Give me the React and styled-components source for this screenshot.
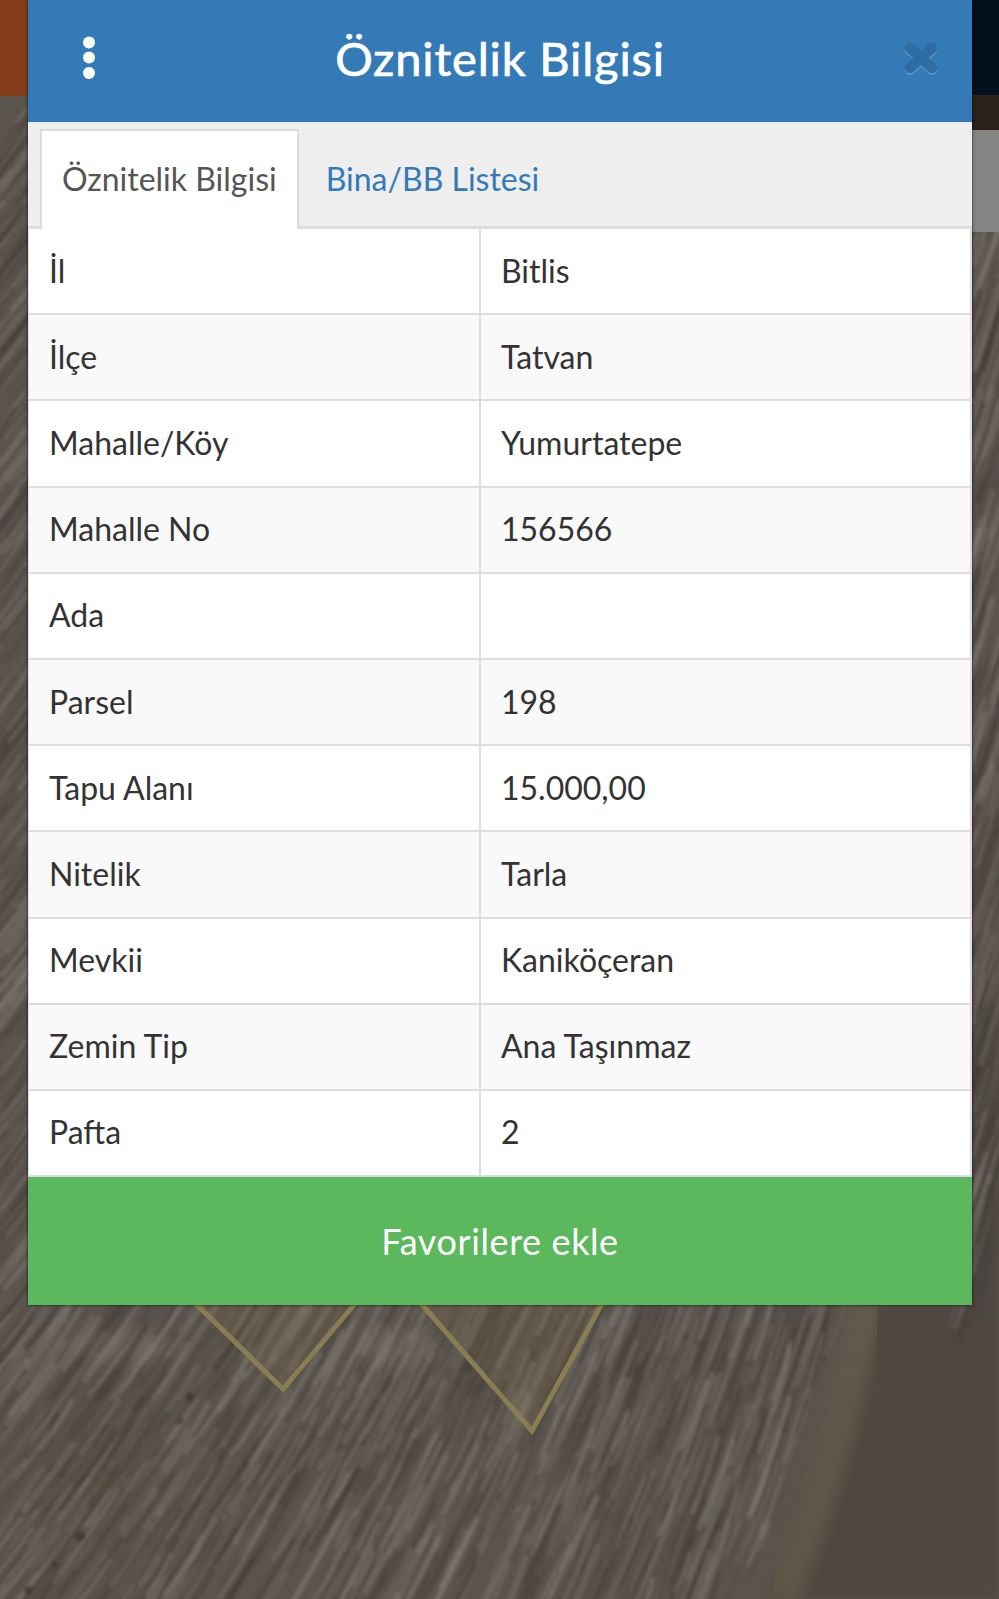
import React, { useMemo } from "react";
import styled, { createGlobalStyle } from "styled-components";

const GlobalStyle = createGlobalStyle`
  html, body {
    margin: 0;
    padding: 0;
    background: #5d5650;
  }
  * {
    box-sizing: border-box;
  }
`;

const Page = styled.div`
  position: relative;
  width: 999px;
  height: 1599px;
  overflow: hidden;
  padding: 0 27px 0 28px;
  font-family: "Lato", "Noto Sans", sans-serif;
`;
const MapImage = styled.svg`
  position: absolute;
  top: 0;
  left: 0;
`;
const Panel = styled.div`
  position: relative;
  display: flex;
  flex-direction: column;
  box-shadow: 0 0 3px rgba(0, 0, 0, 0.75);
`;
const Header = styled.div`
  flex: none;
  display: flex;
  justify-content: space-between;
  align-items: center;
  height: 123px;
  padding: 0 34px 6px 54px;
  background: #337ab7;
  border-bottom: 1px solid #dfe9f2;
`;
const Title = styled.h4`
  margin: 0;
  color: #fff;
  font-size: 47px;
  font-weight: 400;
  letter-spacing: 0.85px;
  -webkit-text-stroke: 0.7px #fff;
`;
const TabBar = styled.div`
  flex: none;
  display: flex;
  align-items: flex-end;
  height: 106px;
  padding-left: 12px;
  background: #eee;
  border-bottom: 3px solid #ddd;
`;
const Tab = styled.div`
  display: flex;
  align-items: center;
  height: 100px;
  margin-right: 5px;
  margin-bottom: -3px;
  padding: 0 20px 4px;
  font-size: 32px;
  color: ${(p) => (p.$active ? "#555" : "#337ab7")};
  background: ${(p) => (p.$active ? "#fff" : "transparent")};
  border: 2px solid ${(p) => (p.$active ? "#ddd" : "transparent")};
  border-bottom: none;
`;
const Table = styled.div`
  flex: none;
  display: flex;
  flex-direction: column;
  background: #fff;
  border-left: 1px solid #ddd;
  border-right: 2px solid #ddd;
`;
const Row = styled.div`
  flex: none;
  display: grid;
  grid-template-columns: 452px 1fr;
  height: 86.2px;
  border-bottom: 2px solid #ddd;
  background: ${(p) => (p.$striped ? "#f9f9f9" : "#fff")};
`;
const Cell = styled.div`
  display: flex;
  align-items: center;
  padding: 0 0 2px 20px;
  color: #333;
  font-size: 32px;
  border-right: ${(p) => (p.$first ? "2px solid #ddd" : "none")};
`;
const AddButton = styled.button`
  flex: none;
  height: 128px;
  border: none;
  padding: 0;
  background: #5cb85c;
  color: #fff;
  font-family: inherit;
  font-size: 36px;
  letter-spacing: 0.6px;
`;

const rows = [
  ["İl", "Bitlis"],
  ["İlçe", "Tatvan"],
  ["Mahalle/Köy", "Yumurtatepe"],
  ["Mahalle No", "156566"],
  ["Ada", ""],
  ["Parsel", "198"],
  ["Tapu Alanı", "15.000,00"],
  ["Nitelik", "Tarla"],
  ["Mevkii", "Kaniköçeran"],
  ["Zemin Tip", "Ana Taşınmaz"],
  ["Pafta", "2"],
];

const random = (seed) => () => {
  seed = (seed + 0x6d2b79f5) | 0;
  let t = Math.imul(seed ^ (seed >>> 15), 1 | seed);
  t = (t + Math.imul(t ^ (t >>> 7), 61 | t)) ^ t;
  return ((t ^ (t >>> 14)) >>> 0) / 4294967296;
};

// furrows of the aerial photo: 50deg on the left, steeper to the right
const makeFurrows = () => {
  const rnd = random(41);
  const furrows = [];
  for (let i = 0; i < 1500; i++) {
    const inMargin = i % 3 === 0;
    const x = inMargin ? (rnd() < 0.5 ? rnd() * 40 : 960 + rnd() * 39) : rnd() * 860;
    const y = inMargin ? 95 + rnd() * 1220 : 1295 + rnd() * 310;
    // the smooth dark field in the corner has no furrows
    if (!inMargin && x > 850 - (y - 1300) * 0.36) continue;
    const angle = ((50 + (Math.min(x, 800) / 800) * 20 + rnd() * 5) * Math.PI) / 180;
    const len = 18 + rnd() * 50;
    const dx = Math.cos(angle) * len;
    const dy = Math.sin(angle) * len;
    const light = rnd() < 0.45;
    furrows.push({
      d: `M${x - dx} ${y + dy}Q${x + 2} ${y + 2} ${x + dx} ${y - dy}`,
      color: light ? "#86817a" : "#413b35",
      width: 2.5 + rnd() * 4,
      opacity: light ? 0.12 + rnd() * 0.3 : 0.15 + rnd() * 0.25,
    });
  }
  return furrows;
};

const FieldMap = () => {
  const furrows = useMemo(makeFurrows, []);
  return (
    <MapImage width="999" height="1599" viewBox="0 0 999 1599">
      <defs>
        <filter id="soft" x="-5%" y="-5%" width="110%" height="110%">
          <feGaussianBlur stdDeviation="1.8" />
        </filter>
        <filter id="softer" x="-10%" y="-10%" width="120%" height="120%">
          <feGaussianBlur stdDeviation="7" />
        </filter>
      </defs>
      <rect width="999" height="1599" fill="#5a544d" />
      <g filter="url(#softer)">
        <path d="M880 1300L770 1599H999V1300Z" fill="#50473f" />
        <path d="M0 1590L180 1420" stroke="#6a5e50" strokeWidth="12" fill="none" />
        <path d="M972 1000L999 1000V1320H972Z" fill="#4c4640" />
        <ellipse cx="120" cy="1345" rx="50" ry="18" fill="#7d7870" opacity="0.5" />
        <ellipse cx="400" cy="1350" rx="40" ry="22" fill="#7d7870" opacity="0.5" />
        <ellipse cx="545" cy="1510" rx="18" ry="45" fill="#85807a" opacity="0.3" transform="rotate(30 545 1510)" />
      </g>
      <g filter="url(#soft)" fill="none" strokeLinecap="round">
        {furrows.map((f, i) => (
          <path key={i} d={f.d} stroke={f.color} strokeWidth={f.width} opacity={f.opacity} />
        ))}
      </g>
      <path
        d="M868 1300Q842 1450 782 1599"
        stroke="#635b4b"
        strokeWidth="34"
        opacity="0.8"
        fill="none"
        filter="url(#softer)"
      />
      <g fill="#2d2620" opacity="0.5" filter="url(#soft)">
        <circle cx="190" cy="1397" r="4" />
        <circle cx="180" cy="1421" r="3" />
        <circle cx="80" cy="1536" r="5" />
        <circle cx="55" cy="1565" r="3" />
        <circle cx="28" cy="1590" r="4" />
      </g>
      <g fill="#8a7450" fillOpacity="0.2" stroke="#897d52" strokeWidth="5" strokeLinejoin="miter">
        <path d="M192 1300L283 1389L358 1300" />
        <path d="M418 1300L532 1431L604 1300" />
      </g>
      <rect width="28" height="96" fill="#853c1a" />
      <rect x="972" width="27" height="95" fill="#03111f" />
      <rect x="972" y="95" width="27" height="35" fill="#2c211b" />
      <rect x="972" y="130" width="27" height="102" fill="#858585" />
    </MapImage>
  );
};

const MenuDots = () => (
  <svg width="14" height="44" viewBox="0 0 14 44">
    <circle cx="7" cy="6.5" r="6" fill="#fff" />
    <circle cx="7" cy="21.5" r="6" fill="#fff" />
    <circle cx="7" cy="37" r="6" fill="#fff" />
  </svg>
);

const CloseIcon = () => (
  <svg width="34" height="40" viewBox="0 0 34 40">
    <path d="M6 12L28 32M28 12L6 32" stroke="#5f97ca" strokeWidth="10" strokeLinecap="round" />
    <path d="M6 10L28 30M28 10L6 30" stroke="#2d6da4" strokeWidth="10.5" strokeLinecap="round" />
  </svg>
);

const App = () => {
  return (
    <Page>
      <GlobalStyle />
      <FieldMap />
      <Panel>
        <Header>
          <MenuDots />
          <Title>Öznitelik Bilgisi</Title>
          <CloseIcon />
        </Header>
        <TabBar>
          <Tab $active>Öznitelik Bilgisi</Tab>
          <Tab>Bina/BB Listesi</Tab>
        </TabBar>
        <Table>
          {rows.map(([label, value], i) => (
            <Row key={label} $striped={i % 2 === 1}>
              <Cell $first>{label}</Cell>
              <Cell>{value}</Cell>
            </Row>
          ))}
        </Table>
        <AddButton>Favorilere ekle</AddButton>
      </Panel>
    </Page>
  );
};

export default App;
